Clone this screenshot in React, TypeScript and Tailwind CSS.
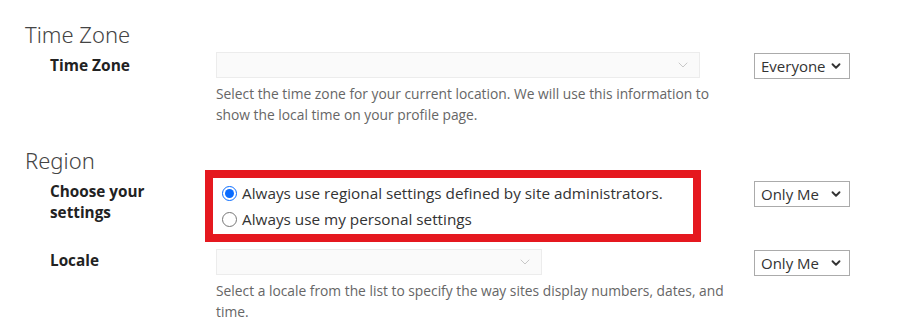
import { ChevronDown } from 'lucide-react';

const font = { fontFamily: '"Open Sans", "Noto Sans", sans-serif' };
const light = { fontFamily: '"Noto Sans", "Open Sans", sans-serif' };

function PermissionSelect({ value }: { value: string }) {
  return (
    <div className="flex h-[26px] w-[96px] items-center justify-between border border-[#ababab] bg-white pl-[6px] pr-[6px] text-[15px] text-[#333]">
      <span>{value}</span>
      <ChevronDown className="h-[14px] w-[14px] text-[#333]" strokeWidth={3.2} />
    </div>
  );
}

function EmptySelect({ width }: { width: string }) {
  return (
    <div
      className={`flex h-[26px] ${width} items-center justify-end border border-[#ececec] bg-[#fafafa] pr-[8px]`}
    >
      <ChevronDown className="h-[16px] w-[16px] text-[#c8c8c8]" strokeWidth={1.5} />
    </div>
  );
}

function Radio({ checked, label }: { checked?: boolean; label: string }) {
  return (
    <label className="flex h-[26px] items-center gap-[5px] text-[15.3px] text-[#333]">
      <span
        className={`flex h-[15px] w-[15px] items-center justify-center rounded-full border ${
          checked ? 'border-[#0a6cff]' : 'border-[#777]'
        } bg-white`}
      >
        {checked && <span className="h-[9px] w-[9px] rounded-full bg-[#0a6cff]" />}
      </span>
      <span>{label}</span>
    </label>
  );
}

export default function App() {
  return (
    <div className="h-[329px] w-[924px] overflow-hidden bg-white pl-[25px] pt-[18px]" style={font}>
      <h2 className="mb-[2px] text-[22px] font-light leading-[32px] text-[#444]" style={light}>
        Time Zone
      </h2>
      <div className="flex">
        <div className="w-[191px] pl-[25px] pt-[2px] text-[15.5px] font-bold leading-[22px] text-[#222]">
          Time Zone
        </div>
        <div className="w-[538px]">
          <EmptySelect width="w-[484px]" />
          <p className="mt-[5px] w-[510px] text-[13.8px] leading-[21px] text-[#666]">
            Select the time zone for your current location. We will use this information to
            show the local time on your profile page.
          </p>
        </div>
        <div className="pt-[1px]">
          <PermissionSelect value="Everyone" />
        </div>
      </div>

      <h2 className="mb-[2px] mt-[19px] text-[22px] font-light leading-[32px] text-[#444]" style={light}>
        Region
      </h2>
      <div className="flex">
        <div className="w-[191px] pl-[25px] pt-[3px] text-[15.3px] font-bold leading-[21px] text-[#222]">
          Choose your
          <br />
          settings
        </div>
        <div className="w-[538px]">
          <div className="ml-[-11px] mt-[-8px] w-[496px] border-[8px] border-[#e5181f] px-[9px] py-[2px]">
            <Radio checked label="Always use regional settings defined by site administrators." />
            <Radio label="Always use my personal settings" />
          </div>
        </div>
        <div className="pt-[3px]">
          <PermissionSelect value="Only Me" />
        </div>
      </div>

      <div className="mt-[7px] flex">
        <div className="w-[191px] pl-[25px] text-[15.3px] font-bold leading-[22px] text-[#222]">Locale</div>
        <div className="w-[538px]">
          <EmptySelect width="w-[326px]" />
          <p className="mt-[5px] w-[520px] text-[13.8px] leading-[21px] text-[#666]">
            Select a locale from the list to specify the way sites display numbers, dates, and
            time.
          </p>
        </div>
        <div className="pt-[1px]">
          <PermissionSelect value="Only Me" />
        </div>
      </div>
    </div>
  );
}
